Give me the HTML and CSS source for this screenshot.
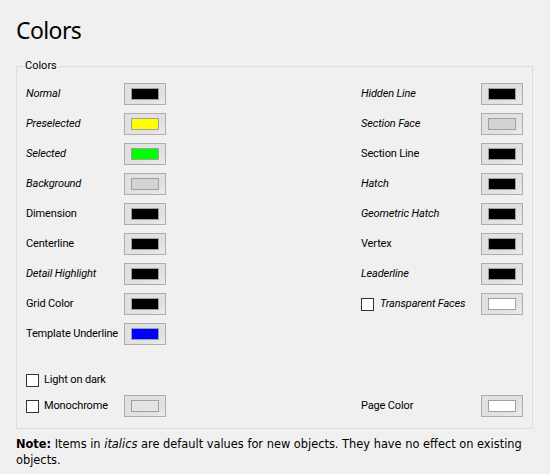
FILE: index.html
```html
<!DOCTYPE html>
<html>
<head>
<meta charset="utf-8">
<link rel="stylesheet" href="styles.css">
</head>
<body>
<h1 class="title">Colors</h1>
<fieldset class="group">
  <legend class="legend">Colors</legend>
  <div class="cols">
    <div class="col col-left">
      <div class="row"><span class="lbl it">Normal</span><span class="btn"><span class="sw" style="background:#000000"></span></span></div>
      <div class="row"><span class="lbl it">Preselected</span><span class="btn"><span class="sw" style="background:#ffff00"></span></span></div>
      <div class="row"><span class="lbl it">Selected</span><span class="btn"><span class="sw" style="background:#00ff00"></span></span></div>
      <div class="row"><span class="lbl it">Background</span><span class="btn"><span class="sw" style="background:#d3d3d3"></span></span></div>
      <div class="row"><span class="lbl">Dimension</span><span class="btn"><span class="sw" style="background:#000000"></span></span></div>
      <div class="row"><span class="lbl">Centerline</span><span class="btn"><span class="sw" style="background:#000000"></span></span></div>
      <div class="row"><span class="lbl it">Detail Highlight</span><span class="btn"><span class="sw" style="background:#000000"></span></span></div>
      <div class="row"><span class="lbl">Grid Color</span><span class="btn"><span class="sw" style="background:#000000"></span></span></div>
      <div class="row"><span class="lbl">Template Underline</span><span class="btn"><span class="sw" style="background:#0000ff"></span></span></div>
    </div>
    <div class="col col-right">
      <div class="row"><span class="lbl it">Hidden Line</span><span class="btn"><span class="sw" style="background:#000000"></span></span></div>
      <div class="row"><span class="lbl it">Section Face</span><span class="btn"><span class="sw" style="background:#d3d3d3"></span></span></div>
      <div class="row"><span class="lbl">Section Line</span><span class="btn"><span class="sw" style="background:#000000"></span></span></div>
      <div class="row"><span class="lbl it">Hatch</span><span class="btn"><span class="sw" style="background:#000000"></span></span></div>
      <div class="row"><span class="lbl it">Geometric Hatch</span><span class="btn"><span class="sw" style="background:#000000"></span></span></div>
      <div class="row"><span class="lbl">Vertex</span><span class="btn"><span class="sw" style="background:#000000"></span></span></div>
      <div class="row"><span class="lbl it">Leaderline</span><span class="btn"><span class="sw" style="background:#000000"></span></span></div>
      <div class="row"><span class="lbl check-lbl"><span class="box"></span><span class="it">Transparent Faces</span></span><span class="btn"><span class="sw" style="background:#ffffff"></span></span></div>
    </div>
  </div>
  <div class="bottom">
    <div class="brow"><span class="lbl check-lbl"><span class="box"></span><span>Light on dark</span></span></div>
    <div class="brow brow-split">
      <div class="pair pair-left"><span class="lbl check-lbl"><span class="box"></span><span>Monochrome</span></span><span class="btn"><span class="sw" style="background:#e3e3e3"></span></span></div>
      <div class="pair pair-right"><span class="lbl">Page Color</span><span class="btn"><span class="sw" style="background:#ffffff"></span></span></div>
    </div>
  </div>
</fieldset>
<p class="note"><span class="note-line"><b>Note:</b> Items in <i>italics</i> are default values for new objects. They have no effect on existing objects.</span></p>
</body>
</html>
```

FILE: styles.css
```css
html, body {
  margin: 0;
  padding: 0;
  background: #f0f0f0;
}
body {
  padding: 14px 16px 0 16px;
  width: 518px;
  font-family: Roboto, "Noto Sans", sans-serif;
  color: #000;
}
.title {
  margin: 0;
  font-family: "Noto Sans", sans-serif;
  font-weight: 400;
  font-size: 23px;
  line-height: 32px;
  letter-spacing: -0.6px;
  height: 32px;
}
.group {
  margin: 13px 0 0 0;
  padding: 6px 9px 11px 9px;
  border: 1px solid #dcdcdc;
  width: 517px;
  box-sizing: border-box;
  min-width: 0;
}
.legend {
  padding: 0 2px;
  margin-left: -3px;
  font-size: 11px;
  line-height: 14px;
}
.cols {
  display: flex;
  justify-content: space-between;
}
.col {
  display: flex;
  flex-direction: column;
}
.row {
  height: 30px;
  display: flex;
  align-items: center;
}
.lbl {
  font-size: 11px;
  line-height: 14px;
  white-space: nowrap;
  letter-spacing: -0.15px;
}
.col-left .lbl,
.pair-left .lbl { width: 98px; }
.col-right .lbl,
.pair-right .lbl { width: 120px; }
.it { font-style: italic; }
.btn {
  width: 42px;
  height: 22px;
  box-sizing: border-box;
  border: 1px solid #adadad;
  background: linear-gradient(to bottom right, #e1e1e1 70%, #ececec);
  display: flex;
  align-items: center;
  justify-content: center;
  flex: none;
}
.sw {
  width: 28px;
  height: 12px;
  box-sizing: border-box;
  border: 1px solid #a0a0a0;
  display: block;
}
.check-lbl {
  display: flex;
  align-items: center;
}
.box {
  width: 13px;
  height: 13px;
  box-sizing: border-box;
  border: 1px solid #333;
  background: #fff;
  margin-right: 5px;
  flex: none;
}
.col-right .check-lbl .box { margin-right: 6px; }
.bottom {
  margin-top: 20px;
  display: flex;
  flex-direction: column;
  gap: 4px;
}
.brow {
  height: 22px;
  display: flex;
  align-items: center;
}
.brow-split { justify-content: space-between; }
.pair {
  display: flex;
  align-items: center;
}
.note {
  margin: 7px 0 0 0;
  font-family: "DejaVu Sans", sans-serif;
  font-size: 11.4px;
  line-height: 16px;
}
.note b { font-weight: 700; }
.note i { font-style: italic; }
```
